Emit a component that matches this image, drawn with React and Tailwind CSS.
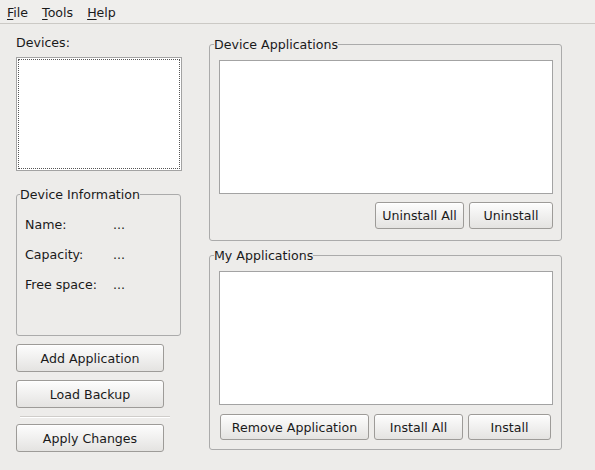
import React from "react";

const font = { fontFamily: "'DejaVu Sans', 'Liberation Sans', sans-serif" };

const Button = ({ children, className = "" }) => (
  <button
    className={`flex items-center justify-center rounded-[3px] border border-[#9d9b98] bg-gradient-to-b from-[#fdfdfd] to-[#e4e3e1] text-[12.6px] leading-[15px] text-[#1a1a1a] shadow-[inset_0_1px_0_#ffffff] ${className}`}
  >
    {children}
  </button>
);

const ListBox = ({ className = "" }) => (
  <div className={`border border-[#a3a3a3] bg-white ${className}`} />
);

const Frame = ({ title, className = "", children }) => (
  <fieldset
    className={`m-0 min-w-0 rounded-[3px] border border-[#ababab] pl-[4px] pr-[8px] pb-0 pt-0 ${className}`}
  >
    <legend className="px-0 text-[12.6px] leading-[15px] text-[#1a1a1a]">{title}</legend>
    {children}
  </fieldset>
);

const MenuItem = ({ first, rest }) => (
  <span className="text-[12.6px] leading-[15px] text-[#1a1a1a]">
    <span className="underline underline-offset-2">{first}</span>
    {rest}
  </span>
);

const App = () => {
  const info = [
    ["Name:", "..."],
    ["Capacity:", "..."],
    ["Free space:", "..."],
  ];

  return (
    <div className="h-[470px] w-[595px] overflow-hidden bg-[#edecea]" style={font}>
      {/* Menu bar */}
      <div className="flex h-[24px] items-center gap-[14px] border-b border-[#cbc9c5] bg-[#efeeec] pl-[7px] pt-[1px]">
        <MenuItem first="F" rest="ile" />
        <MenuItem first="T" rest="ools" />
        <MenuItem first="H" rest="elp" />
      </div>

      <div className="flex">
        {/* Left column */}
        <div className="ml-[16px] flex w-[166px] flex-col">
          <div className="mt-[11px] text-[12.6px] leading-[15px] text-[#1a1a1a]">Devices:</div>
          <div className="mt-[7px] h-[114px] border border-[#a3a3a3] bg-white p-[1px]">
            <div className="h-full w-full border border-dotted border-[#555]" />
          </div>

          <fieldset className="m-0 mt-[16px] h-[149px] w-[165px] min-w-0 rounded-[3px] border border-[#ababab] pb-0 pl-[3px] pr-0 pt-0">
            <legend className="px-0 text-[12.6px] leading-[15px] text-[#1a1a1a]">Device Information</legend>
            <div className="ml-[5px] mt-[15px] flex flex-col gap-[15px]">
              {info.map(([label, value]) => (
                <div key={label} className="flex text-[12.6px] leading-[15px] text-[#1a1a1a]">
                  <span className="w-[88px]">{label}</span>
                  <span>{value}</span>
                </div>
              ))}
            </div>
          </fieldset>

          <Button className="mt-[8px] h-[28px] w-[148px]">Add Application</Button>
          <Button className="mt-[8px] h-[28px] w-[148px]">Load Backup</Button>
          <div className="ml-[4px] mt-[8px] w-[150px] border-b border-t border-b-white border-t-[#cfcdca]" />
          <Button className="mt-[6px] h-[28px] w-[148px]">Apply Changes</Button>
        </div>

        {/* Right column */}
        <div className="ml-[27px] flex w-[353px] flex-col">
          <Frame title="Device Applications" className="mt-[13px] h-[204px]">
            <ListBox className="ml-[5px] mt-[8px] h-[134px]" />
            <div className="mt-[8px] flex justify-end gap-[5px]">
              <Button className="h-[27px] w-[89px]">Uninstall All</Button>
              <Button className="h-[27px] w-[84px]">Uninstall</Button>
            </div>
          </Frame>

          <Frame title="My Applications" className="mt-[7px] h-[202px]">
            <ListBox className="ml-[5px] mt-[8px] h-[134px]" />
            <div className="ml-[6px] mt-[9px] flex gap-[5px]">
              <Button className="h-[26px] w-[149px]">Remove Application</Button>
              <Button className="h-[26px] w-[89px]">Install All</Button>
              <Button className="h-[26px] w-[83px]">Install</Button>
            </div>
          </Frame>
        </div>
      </div>
    </div>
  );
};

export default App;
